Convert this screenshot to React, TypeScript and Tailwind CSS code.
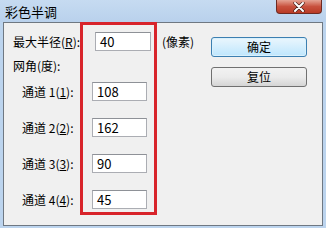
import React from 'react';

const font = { fontFamily: '"Noto Sans CJK SC", "Liberation Sans", sans-serif' };

function Field({ value, width }: { value: string; width: string }) {
  return (
    <div
      className={`${width} h-[19px] bg-white border border-[#abadb3] border-t-[#8e9197] flex items-center pl-[4px] text-[13px] leading-none text-black`}
    >
      {value}
    </div>
  );
}

function Channel({ n, value }: { n: string; value: string }) {
  return (
    <div className="flex items-center h-[19px]">
      <div className="w-[70px] ml-[9px] text-[12px] leading-none whitespace-nowrap">
        通道 {n}(<u>{n}</u>):
      </div>
      <Field value={value} width="w-[55px]" />
    </div>
  );
}

export default function App() {
  return (
    <div
      className="relative w-[326px] h-[228px] overflow-hidden bg-[#bcd4ee] flex flex-col text-black"
      style={font}
    >
      {/* title bar */}
      <div className="h-[22px] flex items-center pl-[5px] text-[13px] leading-none bg-gradient-to-b from-[#c6dbf1] to-[#b9d1ec]">
        彩色半调
      </div>
      <div className="absolute left-[276px] top-0 w-[46px] h-[14px] rounded-b-[4px] border border-t-0 border-[#6d2a22] bg-gradient-to-b from-[#e4a394] via-[#c8513e] to-[#b93a25] flex items-center justify-center">
        <svg width="12" height="10" viewBox="0 0 12 10">
          <path d="M2 1 L10 9 M10 1 L2 9" stroke="#3d1a14" strokeWidth="3.2" strokeLinecap="round" />
          <path d="M2 1 L10 9 M10 1 L2 9" stroke="#ffffff" strokeWidth="2" strokeLinecap="round" />
        </svg>
      </div>

      {/* client panel */}
      <div className="mx-[3px] mb-[2px] flex-1 border border-[#6f7882] bg-[#f0f0f0] flex justify-between">
        <div className="flex flex-col pt-[9px] pl-[9px]">
          <div className="flex items-center h-[19px]">
            <div className="w-[82px] text-[12px] leading-none whitespace-nowrap">
              最大半径(<u>R</u>):
            </div>
            <Field value="40" width="w-[56px]" />
            <div className="ml-[11px] text-[12px] leading-none">(像素)</div>
          </div>
          <div className="mt-[7px] h-[16px] flex items-center text-[12px] leading-none">
            网角(度):
          </div>
          <div className="mt-[8px] flex flex-col gap-[17px]">
            <Channel n="1" value="108" />
            <Channel n="2" value="162" />
            <Channel n="3" value="90" />
            <Channel n="4" value="45" />
          </div>
        </div>

        <div className="flex flex-col gap-[10px] pt-[14px] mr-[15px]">
          <div className="w-[96px] h-[20px] rounded-[3px] border border-[#3c7fb1] bg-gradient-to-b from-[#eaf6fd] to-[#bee6fd] shadow-[inset_0_0_0_1px_#d9f0fc] flex items-center justify-center text-[12px] leading-none">
            确定
          </div>
          <div className="w-[96px] h-[20px] rounded-[3px] border border-[#707070] bg-gradient-to-b from-[#f2f2f2] via-[#ebebeb] to-[#d5d5d5] flex items-center justify-center text-[12px] leading-none">
            复位
          </div>
        </div>
      </div>

      {/* red highlight annotation */}
      <div className="absolute left-[80px] top-[22px] w-[77px] h-[193px] border-[3px] border-[#d8242b]" />
    </div>
  );
}
